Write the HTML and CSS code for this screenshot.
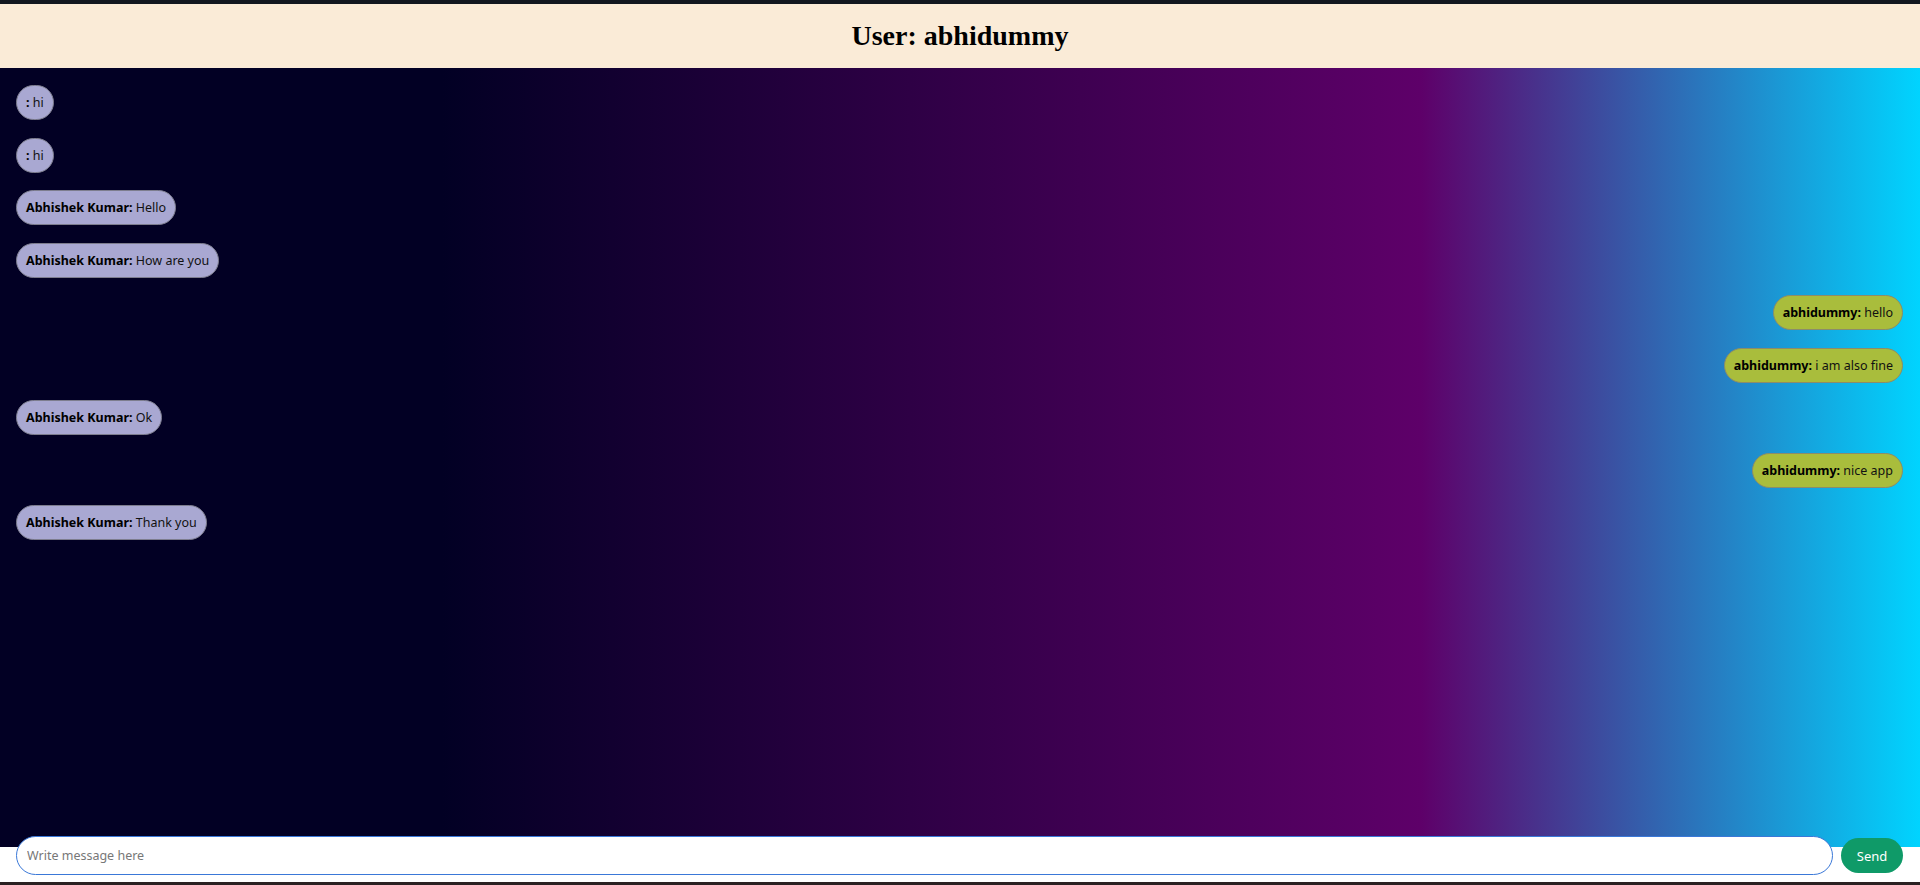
FILE: index.html
```html
<!DOCTYPE html>
<html>
<head>
<meta charset="utf-8">
<title>Chat</title>
<link rel="stylesheet" href="styles.css">
</head>
<body>
<div class="app">
  <header class="header"><h2 class="title">User: abhidummy</h2></header>
  <main class="chat">
    <div class="msg left"><span class="bubble"><b>:</b> hi</span></div>
    <div class="msg left"><span class="bubble"><b>:</b> hi</span></div>
    <div class="msg left"><span class="bubble"><b>Abhishek Kumar:</b> Hello</span></div>
    <div class="msg left"><span class="bubble"><b>Abhishek Kumar:</b> How are you</span></div>
    <div class="msg right"><span class="bubble"><b>abhidummy:</b> hello</span></div>
    <div class="msg right"><span class="bubble"><b>abhidummy:</b> i am also fine</span></div>
    <div class="msg left"><span class="bubble"><b>Abhishek Kumar:</b> Ok</span></div>
    <div class="msg right"><span class="bubble"><b>abhidummy:</b> nice app</span></div>
    <div class="msg left"><span class="bubble"><b>Abhishek Kumar:</b> Thank you</span></div>
  </main>
  <footer class="footer">
    <input class="input" type="text" placeholder="Write message here" autofocus>
    <button class="send">Send</button>
  </footer>
</div>
</body>
</html>
```
FILE: styles.css
```css
* { box-sizing: border-box; }
html, body { margin: 0; padding: 0; height: 100%; }
body { background: #121820; font-family: "Noto Sans", "Open Sans", sans-serif; }
.app {
  height: 885px;
  display: flex;
  flex-direction: column;
  border-top: 4px solid #12171f;
  border-bottom: 3px solid #2a2122;
}
.header {
  height: 64px;
  flex: none;
  background: #faebd7;
  display: flex;
  align-items: center;
  justify-content: center;
}
.title {
  margin: 0;
  font-family: "Liberation Serif", serif;
  font-weight: bold;
  font-size: 28px;
  color: #000;
}
.chat {
  flex: 1;
  background: linear-gradient(90deg, #020024 23%, #5e0069 74%, #00d4ff 100%);
  padding: 17px 17px 0 16px;
  display: flex;
  flex-direction: column;
  gap: 17.5px;
}
.msg { display: flex; }
.msg.right { justify-content: flex-end; }
.bubble {
  font-size: 12.5px;
  line-height: 17px;
  padding: 8px 9px;
  border-radius: 18px;
  border: 1px solid #7d7d8e;
  color: #111;
}
.bubble b { font-weight: bold; color: #000; }
.left .bubble { background: #a9a8d2; }
.right .bubble { background: #a9bd3c; border-color: #8b8c6a; }
.footer {
  flex: none;
  height: 46px;
  margin-top: -11px;
  position: relative;
  background: linear-gradient(transparent 11px, #fff 11px);
  display: flex;
  align-items: flex-start;
  gap: 8px;
  padding: 0 17px 0 16px;
}
.input {
  flex: 1;
  height: 39px;
  border: 1.5px solid #3a78d8;
  border-radius: 20px;
  padding: 0 10px;
  font-family: "Noto Sans", "Open Sans", sans-serif;
  font-size: 12.5px;
  outline: none;
  background: #fff;
}
.input::placeholder { color: #777; }
.send {
  margin-top: 2px;
  width: 62px;
  height: 35px;
  border: none;
  border-radius: 18px;
  background: #0f9a68;
  color: #fff;
  font-family: "Noto Sans", "Open Sans", sans-serif;
  font-size: 13px;
}
```
